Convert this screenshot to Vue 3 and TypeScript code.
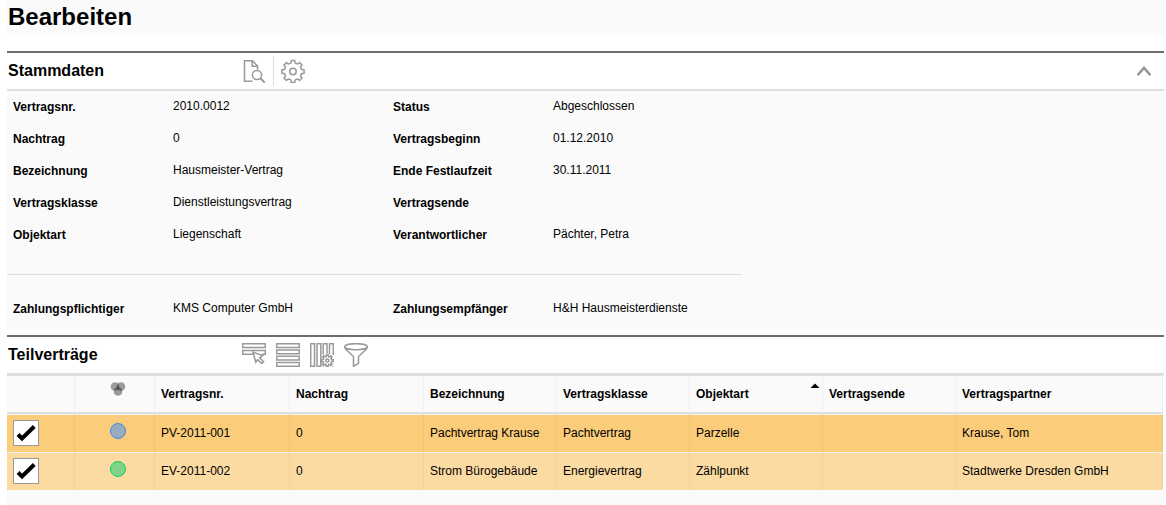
<script setup lang="ts">
import { ref } from 'vue'

interface Field {
  label: string
  value: string
}

interface Contract {
  number: string
  amendment: string
  title: string
  category: string
  objectType: string
  end: string
  partner: string
  state: 'blue' | 'green'
  selected: boolean
}

const masterData: Field[] = [
  { label: 'Vertragsnr.', value: '2010.0012' },
  { label: 'Status', value: 'Abgeschlossen' },
  { label: 'Nachtrag', value: '0' },
  { label: 'Vertragsbeginn', value: '01.12.2010' },
  { label: 'Bezeichnung', value: 'Hausmeister-Vertrag' },
  { label: 'Ende Festlaufzeit', value: '30.11.2011' },
  { label: 'Vertragsklasse', value: 'Dienstleistungsvertrag' },
  { label: 'Vertragsende', value: '' },
  { label: 'Objektart', value: 'Liegenschaft' },
  { label: 'Verantwortlicher', value: 'Pächter, Petra' },
]

const payment: Field[] = [
  { label: 'Zahlungspflichtiger', value: 'KMS Computer GmbH' },
  { label: 'Zahlungsempfänger', value: 'H&H Hausmeisterdienste' },
]

const contracts = ref<Contract[]>([
  {
    number: 'PV-2011-001',
    amendment: '0',
    title: 'Pachtvertrag Krause',
    category: 'Pachtvertrag',
    objectType: 'Parzelle',
    end: '',
    partner: 'Krause, Tom',
    state: 'blue',
    selected: true,
  },
  {
    number: 'EV-2011-002',
    amendment: '0',
    title: 'Strom Bürogebäude',
    category: 'Energievertrag',
    objectType: 'Zählpunkt',
    end: '',
    partner: 'Stadtwerke Dresden GmbH',
    state: 'green',
    selected: true,
  },
])

const open = ref(true)

// Outline of a cog with rounded teeth, centred on the given point.
function cog(cx: number, cy: number, outer: number, inner: number): string {
  const teeth = 8
  const step = (Math.PI * 2) / teeth
  const point = (radius: number, angle: number) =>
    `${(cx + radius * Math.sin(angle)).toFixed(2)} ${(cy - radius * Math.cos(angle)).toFixed(2)}`
  const parts: string[] = []
  for (let i = 0; i < teeth; i++) {
    const a = i * step
    parts.push(`${i === 0 ? 'M' : 'L'}${point(outer, a - step * 0.2)}`)
    parts.push(`L${point(outer, a + step * 0.2)}`)
    parts.push(`L${point(inner, a + step * 0.27)}`)
    parts.push(`Q${point(inner - 0.8, a + step * 0.5)} ${point(inner, a + step * 0.73)}`)
  }
  return parts.join('') + 'Z'
}

const largeCog = cog(12, 12.5, 11.2, 9)
const smallCog = cog(17.3, 17.6, 5.9, 4.6)
</script>

<template>
  <main class="page">
    <h1 class="title">Bearbeiten</h1>

    <section class="section">
      <header class="bar">
        <h2>Stammdaten</h2>
        <div class="tools">
          <button type="button" aria-label="Vorschau">
            <svg viewBox="0 0 24 24">
              <path d="M10.5 22.3H2.5V1.7H10.5L15.5 7V10.5M10.2 1.7V7.3H15.5" />
              <circle cx="15" cy="16" r="4.6" />
              <path d="M18.3 19.3L22.8 23.6" class="thick" />
            </svg>
          </button>
          <span class="separator"></span>
          <button type="button" aria-label="Einstellungen">
            <svg viewBox="0 0 24 24">
              <path :d="largeCog" />
              <circle cx="12" cy="12.5" r="3.2" />
            </svg>
          </button>
        </div>
        <button type="button" class="toggle" aria-label="Stammdaten ein- oder ausklappen" :aria-expanded="open" @click="open = !open">
          <svg viewBox="0 0 16 12" :class="{ closed: !open }">
            <path d="M1.6 10.2L8 3L14.4 10.2" />
          </svg>
        </button>
      </header>
      <div v-if="open" class="panel">
        <dl class="fields">
          <template v-for="field in masterData" :key="field.label">
            <dt>{{ field.label }}</dt>
            <dd>{{ field.value }}</dd>
          </template>
        </dl>
        <hr />
        <dl class="fields">
          <template v-for="field in payment" :key="field.label">
            <dt>{{ field.label }}</dt>
            <dd>{{ field.value }}</dd>
          </template>
        </dl>
      </div>
    </section>

    <section class="section">
      <header class="bar">
        <h2>Teilverträge</h2>
        <div class="tools list-tools">
          <button type="button" aria-label="Auswählen">
            <svg viewBox="0 0 24 24">
              <path d="M.7 .7H23.3V4.6H.7ZM12 11.3H.7V7.4H23.3V11.3H20" />
              <path class="paper" d="M11 9.2L20.6 12.6L17.6 14.8L21.6 18.7L19.7 20.5L15.7 16.6L13.8 19.2Z" />
            </svg>
          </button>
          <button type="button" aria-label="Listenansicht">
            <svg viewBox="0 0 24 24">
              <path d="M.7 .7H23.3V4.5H.7ZM.7 7H23.3V10.8H.7ZM.7 13.2H23.3V17H.7ZM.7 19.5H23.3V23.3H.7Z" />
            </svg>
          </button>
          <button type="button" aria-label="Spalten einstellen">
            <svg viewBox="0 0 24 24">
              <path d="M.7 .7H4.5V23.3H.7ZM7 .7H10.8V23.3H7ZM13.2 11.5V.7H17V10.5M19.5 11V.7H23.3V12M13.2 22.5V23.3M22.5 23.3H23.3" />
              <path :d="smallCog" />
              <circle cx="17.3" cy="17.6" r="1.6" />
            </svg>
          </button>
          <button type="button" aria-label="Filtern">
            <svg viewBox="0 0 24 24">
              <ellipse cx="12" cy="3.7" rx="11.3" ry="3" />
              <path d="M.7 3.7C.7 6 3 7.5 5 9.2L9.5 13.5V23.3L14.5 20.3V13.5L19 9.2C21 7.5 23.3 6 23.3 3.7" />
            </svg>
          </button>
        </div>
      </header>
      <table>
        <colgroup>
          <col class="col-check" />
          <col class="col-state" />
          <col class="col-number" />
          <col class="col-amendment" />
          <col class="col-mid" />
          <col class="col-mid" />
          <col class="col-mid" />
          <col class="col-mid" />
          <col />
        </colgroup>
        <thead>
          <tr>
            <th scope="col" aria-label="Auswahl"></th>
            <th scope="col" class="state" aria-label="Zustand">
              <svg class="venn" viewBox="0 0 16 14">
                <circle cx="5" cy="4.5" r="4.3" />
                <circle cx="11" cy="4.5" r="4.3" />
                <circle cx="8" cy="9.5" r="4.3" />
              </svg>
            </th>
            <th scope="col">Vertragsnr.</th>
            <th scope="col">Nachtrag</th>
            <th scope="col">Bezeichnung</th>
            <th scope="col">Vertragsklasse</th>
            <th scope="col" aria-sort="ascending">
              <div class="sorted">
                <span>Objektart</span>
                <svg viewBox="0 0 10 6"><path d="M.5 5L5 .5L9.5 5Z" /></svg>
              </div>
            </th>
            <th scope="col">Vertragsende</th>
            <th scope="col">Vertragspartner</th>
          </tr>
        </thead>
        <tbody>
          <tr v-for="contract in contracts" :key="contract.number">
            <td class="check">
              <label>
                <input v-model="contract.selected" type="checkbox" :aria-label="contract.number + ' auswählen'" />
                <svg v-if="contract.selected" viewBox="0 0 26 26">
                  <path d="M5 14.5L9 18.5L21.3 6.5" />
                </svg>
              </label>
            </td>
            <td class="state"><span class="dot" :class="contract.state"></span></td>
            <td>{{ contract.number }}</td>
            <td>{{ contract.amendment }}</td>
            <td>{{ contract.title }}</td>
            <td>{{ contract.category }}</td>
            <td>{{ contract.objectType }}</td>
            <td>{{ contract.end }}</td>
            <td>{{ contract.partner }}</td>
          </tr>
        </tbody>
      </table>
      <footer class="rest"></footer>
    </section>
  </main>
</template>

<style>
body {
  background: #fff;
}
</style>

<style scoped>
.page {
  padding: 0 2px 0 7px;
  color: #000;
  font-family: "Liberation Sans", Arial, sans-serif;
  font-size: 12px;
  line-height: 16px;
}

.page * {
  box-sizing: border-box;
}

.title {
  margin: 0 0 16px;
  padding: 2px 1px 3px;
  background: #fafafa;
  font-size: 24px;
  line-height: 30px;
}

.bar {
  display: flex;
  align-items: center;
  height: 40px;
  border-top: 2px solid #6e6e6e;
  border-bottom: 2px solid #dedede;
}

.bar h2 {
  width: 235px;
  margin: 0;
  padding-left: 1px;
  font-size: 16px;
  line-height: 20px;
}

.tools {
  display: flex;
  align-items: center;
  gap: 7px;
}

.list-tools {
  gap: 10px;
}

button {
  display: flex;
  padding: 0;
  border: 0;
  background: none;
  cursor: pointer;
}

button svg {
  width: 24px;
  height: 24px;
  fill: none;
  stroke: #999;
  stroke-width: 1.5;
}

button svg .thick {
  stroke-width: 2;
}

button svg .paper {
  fill: #fff;
}

.separator {
  width: 1px;
  height: 30px;
  background: #dedede;
}

.toggle {
  margin-left: auto;
  margin-right: 12px;
}

.toggle svg {
  width: 16px;
  height: 12px;
  stroke-width: 2.6;
}

.toggle svg.closed {
  transform: rotate(180deg);
}

.panel {
  margin-bottom: 5px;
  padding-bottom: 5px;
  background: #fafafa;
}

.fields {
  display: grid;
  grid-template-columns: 160px 220px 160px 1fr;
  margin: 0;
  padding-left: 6px;
}

dt,
dd {
  height: 32px;
  margin: 0;
}

dt {
  padding-top: 8px;
  font-weight: bold;
}

dd {
  padding-top: 7px;
}

hr {
  width: 735px;
  max-width: 100%;
  height: 1px;
  margin: 23px 0 18px;
  border: 0;
  background: #dedede;
}

table {
  width: calc(100% - 1px);
  border-collapse: separate;
  border-spacing: 0;
  border-top: 1px solid #dedede;
  table-layout: fixed;
}

.col-check {
  width: 68px;
}

.col-state {
  width: 80px;
}

.col-number {
  width: 135px;
}

.col-amendment {
  width: 134px;
}

.col-mid {
  width: 133px;
}

th,
td {
  border-right: 1px solid rgba(0, 0, 0, 0.04);
  text-align: left;
  white-space: nowrap;
}

th {
  height: 38px;
  padding: 0 0 0 6px;
  border-bottom: 2px solid #dedede;
  background: #fafafa;
}

td {
  height: 38px;
  padding: 0 0 2px 6px;
  border-top: 1px solid #f3f3f3;
  background: #fcdba3;
}

tbody tr:nth-child(odd) td {
  background: #fbcc79;
}

.state {
  padding-left: 7px;
  text-align: center;
}

.venn {
  display: block;
  width: 16px;
  height: 14px;
  margin: 0 auto 11px;
  fill: #000;
  fill-opacity: 0.38;
}

.sorted {
  display: flex;
  align-items: center;
  justify-content: space-between;
  height: 22px;
  padding-right: 2px;
}

.sorted svg {
  align-self: flex-start;
  width: 10px;
  height: 6px;
}

.check label {
  position: relative;
  display: block;
  width: 26px;
  height: 26px;
}

.check input {
  display: block;
  appearance: none;
  width: 26px;
  height: 26px;
  margin: 0;
  border: 1px solid #999;
  background: #fff;
}

.check svg {
  position: absolute;
  inset: 0;
  fill: none;
  stroke: #000;
  stroke-width: 4;
  pointer-events: none;
}

.dot {
  display: block;
  width: 16px;
  height: 16px;
  margin: 0 auto 3px;
  border: 1px solid #3d8bea;
  border-radius: 50%;
  background: #98abc0;
}

.dot.green {
  border-color: #0dcb62;
  background: #80d488;
}

.rest {
  height: 15px;
  background: #fafafa;
}
</style>
